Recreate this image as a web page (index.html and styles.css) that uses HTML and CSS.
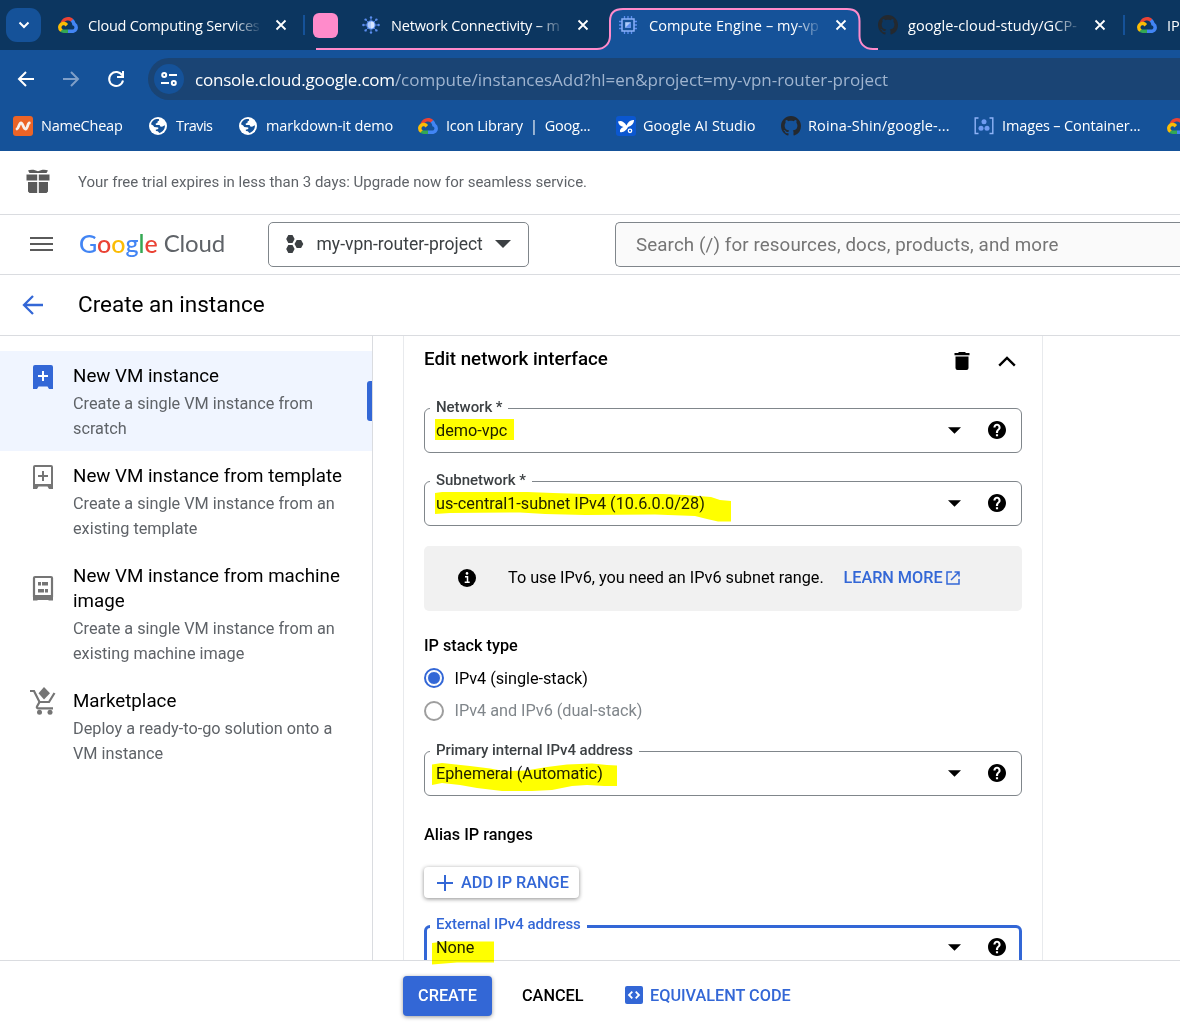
FILE: index.html
```html
<!DOCTYPE html>
<html lang="en">
<head>
<meta charset="utf-8">
<title>Compute Engine – my-vpn-router-project</title>
<link rel="stylesheet" href="styles.css">
</head>
<body>
<svg class="defs" aria-hidden="true">
  <symbol id="gcloud" viewBox="0 0 256 206">
    <path fill="#ea4335" d="M170.252 56.819l22.253-22.253 1.483-9.37C153.437-11.677 88.976-7.496 52.42 33.92 42.267 45.423 34.734 59.764 30.717 74.573l7.97-1.123 44.505-7.34 3.436-3.513c19.797-21.742 53.27-24.667 76.128-6.168z"/>
    <path fill="#4285f4" d="M224.205 73.918a100.249 100.249 0 0 0-30.217-48.722l-31.232 31.232a55.515 55.515 0 0 1 20.379 44.037v5.544c15.351 0 27.797 12.445 27.797 27.796 0 15.352-12.446 27.485-27.797 27.485h-55.671l-5.466 5.934v33.34l5.466 5.231h55.67c39.93.311 72.553-31.494 72.864-71.424a72.303 72.303 0 0 0-31.793-60.453"/>
    <path fill="#34a853" d="M71.87 205.796h55.593V161.29H71.87a27.275 27.275 0 0 1-11.4-2.498l-7.887 2.42-22.409 22.253-1.952 7.574a72.006 72.006 0 0 0 43.648 14.757"/>
    <path fill="#fbbc05" d="M71.87 61.425C31.94 61.664-.237 94.228.001 134.158a72.301 72.301 0 0 0 28.222 56.88l32.248-32.246c-13.99-6.322-20.208-22.786-13.887-36.776 6.32-13.99 22.786-20.208 36.775-13.888a27.796 27.796 0 0 1 13.887 13.888l32.248-32.248A72.224 72.224 0 0 0 71.87 61.425"/>
  </symbol>
  <symbol id="github" viewBox="0 0 16 16">
    <path fill="#24292f" d="M8 0C3.58 0 0 3.58 0 8c0 3.54 2.29 6.53 5.47 7.59.4.07.55-.17.55-.38 0-.19-.01-.82-.01-1.49-2.01.37-2.53-.49-2.69-.94-.09-.23-.48-.94-.82-1.13-.28-.15-.68-.52-.01-.53.63-.01 1.08.58 1.23.82.72 1.21 1.87.87 2.33.66.07-.52.28-.87.51-1.07-1.78-.2-3.64-.89-3.64-3.95 0-.87.31-1.59.82-2.15-.08-.2-.36-1.02.08-2.12 0 0 .67-.21 2.2.82.64-.18 1.32-.27 2-.27s1.36.09 2 .27c1.53-1.04 2.2-.82 2.2-.82.44 1.1.16 1.92.08 2.12.51.56.82 1.27.82 2.15 0 3.07-1.87 3.75-3.65 3.95.29.25.54.73.54 1.48 0 1.07-.01 1.93-.01 2.2 0 .21.15.46.55.38A8.01 8.01 0 0 0 16 8c0-4.42-3.58-8-8-8z"/>
  </symbol>
  <symbol id="globe" viewBox="0 0 18 18">
    <circle cx="9" cy="9" r="9" fill="#fff"/>
    <path fill="#155299" d="M2 7.2C2.6 4.500 4.800 2.500 7.500 2.050L9.800 2.100L10.200 3.400L8.600 4.600L8.400 5.900L6.700 6.600L6.900 7.900L10.600 8L11.300 9.600L13 9.800L15.900 8.200C16.200 11.700 13.900 14.900 10.400 15.900L8.800 14.200L7 14.100L6.700 12.800L9.300 12.100L9.200 10.600L5.200 9.900L4.200 8.400Z"/>
  </symbol>
  <symbol id="close" viewBox="0 0 12 12"><path d="M1.500 1.500l9 9M10.500 1.500l-9 9" stroke="#fff" stroke-width="1.800" fill="none"/></symbol>
  <symbol id="help" viewBox="2 2 20 20"><path d="M12 2C6.480 2 2 6.480 2 12s4.480 10 10 10 10-4.480 10-10S17.520 2 12 2zm1.200 17h-2.400v-2.400h2.400V19zm2-7.600l-.9.920C13.500 13.100 13.200 13.700 13.200 15.200h-2.400v-.6c0-1.100.3-2.100 1.100-2.800l1.200-1.300c.4-.3.6-.8.6-1.400 0-1-.8-1.700-1.700-1.700s-1.700.7-1.700 1.700H8c0-2.300 1.800-4.100 4-4.100s4 1.800 4 4.100c0 .9-.3 1.700-.8 2.300z"/></symbol>
  <symbol id="caret" viewBox="0 0 14 7"><path d="M0 0h14L7 7z"/></symbol>
</svg>

<div class="tabstrip">
  <svg class="tab-outline" width="1180" height="51" viewBox="0 0 1180 51">
    <path d="M597 51C605 48 610 43 610 36V21C610 13 615 9 623 9H847C855 9 859.500 13 859.500 21V36C859.500 43 864 48 872 51Z" fill="#155299"/>
    <path d="M316 49H597C605 49 610 43 610 36V21C610 13 615 9 623 9H847C855 9 859.500 13 859.500 21V36C859.500 43 864 49 873 49H878" fill="none" stroke="#ff8bcb" stroke-width="2"/>
  </svg>
  <div class="tab-search"><svg width="12" height="8" viewBox="0 0 12 8"><path d="M1.500 1.500L6 6l4.500-4.500" fill="none" stroke="#fff" stroke-width="2"/></svg></div>
  <div class="tab tab-first">
    <svg class="fav" width="20" height="16"><use href="#gcloud"/></svg>
    <span class="tab-title">Cloud Computing Services</span>
    <svg width="12" height="12"><use href="#close"/></svg>
  </div>
  <span class="tab-sep"></span>
  <span class="group-chip"></span>
  <div class="tab tab-second">
    <svg class="fav" width="18" height="18" viewBox="0 0 18 18"><g stroke="#5b8def" stroke-width=".8"><path d="M9 1v16M1 9h16M3.400 3.400l11.200 11.200M14.600 3.400L3.400 14.600"/></g><g fill="#5b8def"><circle cx="9" cy="1.400" r="1.200"/><circle cx="9" cy="16.600" r="1.200"/><circle cx="1.400" cy="9" r="1.200"/><circle cx="16.600" cy="9" r="1.200"/><circle cx="3.600" cy="3.600" r="1.200"/><circle cx="14.400" cy="3.600" r="1.200"/><circle cx="3.600" cy="14.400" r="1.200"/><circle cx="14.400" cy="14.400" r="1.200"/></g><circle cx="9" cy="9" r="4.600" fill="#5b8def"/><circle cx="9" cy="9" r="3.400" fill="#aecbfa"/><path d="M9 5.600a3.400 3.400 0 0 1 0 6.800z" fill="#d6e4ff"/></svg>
    <span class="tab-title">Network Connectivity – m</span>
    <svg width="12" height="12"><use href="#close"/></svg>
  </div>
  <div class="tab tab-third">
    <svg class="fav" width="18" height="18" viewBox="0 0 18 18"><path d="M5.500 0v18M9 0v18M12.500 0v18M0 5.500h18M0 9h18M0 12.500h18" stroke="#5b8def" stroke-width="1.300"/><rect x="3" y="3" width="12" height="12" fill="#155299" stroke="#8ab0f8" stroke-width="1.500"/><rect x="6.200" y="6.200" width="5.600" height="5.600" fill="#aecbfa"/><path d="M11.800 6.200v5.600H6.200z" fill="#5b8def"/></svg>
    <span class="tab-title">Compute Engine – my-vp</span>
    <svg width="12" height="12"><use href="#close"/></svg>
  </div>
  <div class="tab tab-fourth">
    <svg class="fav" width="20" height="20"><use href="#github"/></svg>
    <span class="tab-title">google-cloud-study/GCP-</span>
    <svg width="12" height="12"><use href="#close"/></svg>
  </div>
  <span class="tab-sep tab-sep-b"></span>
  <div class="tab tab-last">
    <svg class="fav" width="20" height="16"><use href="#gcloud"/></svg>
    <span class="tab-short">IP</span>
  </div>
</div>

<div class="toolbar">
  <div class="nav">
    <svg width="18" height="18" viewBox="0 0 18 18"><path d="M17 9H2M9 2L2 9l7 7" fill="none" stroke="#fff" stroke-width="2"/></svg>
    <svg width="18" height="18" viewBox="0 0 18 18"><path d="M1 9h15M9 2l7 7-7 7" fill="none" stroke="#7f9fc8" stroke-width="2"/></svg>
    <svg width="18" height="18" viewBox="0 0 18 18"><path d="M15.200 5.500A7 7 0 1 0 16 10.500" fill="none" stroke="#fff" stroke-width="2"/><path d="M16 1v6h-6" fill="none" stroke="#fff" stroke-width="2"/></svg>
  </div>
  <div class="omnibox">
    <span class="site-info"><svg width="16" height="14" viewBox="0 0 16 14"><g fill="none" stroke="#fff" stroke-width="2"><circle cx="3.200" cy="3" r="2"/><path d="M8 3h8M0 11h8"/><circle cx="12.800" cy="11" r="2"/></g></svg></span>
    <span class="url"><span class="host">console.cloud.google.com</span>/compute/instancesAdd?hl=en&amp;project=my-vpn-router-project</span>
  </div>
</div>

<div class="bookmarks">
  <div class="bm bm-tight"><svg width="20" height="20" viewBox="0 0 20 20"><rect width="20" height="20" rx="3" fill="#ec6426"/><path d="M4 13C5.500 13 6 7 8 7s2.500 6 4.500 6S14.800 7 16.300 7" fill="none" stroke="#f6f0ec" stroke-width="2.800" stroke-linecap="round"/></svg><span>NameCheap</span></div>
  <div class="bm bm-globe bm-tighter"><svg width="18" height="18"><use href="#globe"/></svg><span>Travis</span></div>
  <div class="bm bm-globe"><svg width="18" height="18"><use href="#globe"/></svg><span>markdown-it demo</span></div>
  <div class="bm bm-tight"><svg width="20" height="16"><use href="#gcloud"/></svg><span>Icon Library&nbsp; |&nbsp; Goog...</span></div>
  <div class="bm bm-loose"><svg width="20" height="20" viewBox="0 0 20 20"><rect width="20" height="20" rx="3" fill="#0b57d0"/><path d="M2 5.500C5 4 8 5.500 10.500 9.500C12 6 14.500 3.500 18 4C18 7.500 15.500 10 12 11C10.500 14 7.500 17 4 16C3.500 13.500 5 12 7.500 11C4.500 10.500 2.500 8.500 2 5.500Z" fill="#fff"/><circle cx="14" cy="14.800" r="1.700" fill="none" stroke="#fff" stroke-width="1.300"/></svg><span>Google AI Studio</span></div>
  <div class="bm bm-looser"><svg width="20" height="20"><use href="#github"/></svg><span>Roina-Shin/google-...</span></div>
  <div class="bm"><svg width="20" height="18" viewBox="0 0 20 18"><path d="M4.500 1H1.200v4.500M1.200 12v4.500h3.300M15.500 1h3.300v4.500M18.800 12v4.500h-3.300M1.200 5v8M18.800 5v8" fill="none" stroke="#8fb3f7" stroke-width="1.400"/><g fill="#6f9bf2"><circle cx="10" cy="4.800" r="2.500"/><circle cx="7" cy="11.200" r="2.500"/><circle cx="13" cy="11.200" r="2.500"/></g></svg><span>Images – Container...</span></div>
  <div class="bm"><svg width="20" height="16"><use href="#gcloud"/></svg></div>
</div>

<div class="trial">
  <svg width="24" height="24" viewBox="0 0 24 24" fill="#5a5a5a"><path d="M2 1.500C4.500.200 9 .400 12 2.300C15 .400 19.500.200 22 1.500L20.500 4H3.500Z"/><path d="M.5 5.500h10.700v6H.5zM12.800 5.500h10.700v6H12.800zM2 13h9.200v11H3.500L2 22.500zM12.800 13H22v9.500L20.500 24h-7.700z"/></svg>
  <span class="trial-text">Your free trial expires in less than 3 days: Upgrade now for seamless service.</span>
</div>

<div class="header">
  <svg class="menu" width="23" height="16" viewBox="0 0 23 16"><path d="M0 2h23M0 8h23M0 14h23" stroke="#5a5a5a" stroke-width="2"/></svg>
  <div class="logo"><span class="google"><span class="g-b">G</span><span class="g-r">o</span><span class="g-y">o</span><span class="g-b">g</span><span class="g-g">l</span><span class="g-r">e</span></span><span class="cloud">Cloud</span></div>
  <div class="project">
    <svg width="18" height="18" viewBox="0 0 18 18" fill="#3c4043"><path d="M2.300 0h4.200l2.100 4-2.100 4H2.300L.2 4zM10.700 5h4.400l2.200 4-2.200 4h-4.400L8.500 9zM2.300 10h4.200l2.100 4-2.100 4H2.300L.2 14z"/></svg>
    <span class="project-name">my-vpn-router-project</span>
    <svg width="16" height="8" fill="#3c4043"><use href="#caret"/></svg>
  </div>
  <div class="search">Search (/) for resources, docs, products, and more</div>
</div>

<div class="titlebar">
  <svg width="22" height="20" viewBox="0 0 22 20"><path d="M21 10H2M11 1L2 10l9 9" fill="none" stroke="#3367d6" stroke-width="2.300"/></svg>
  <h1>Create an instance</h1>
</div>

<div class="main">
  <nav class="side">
    <div class="item item-active">
      <svg class="item-icon" width="26" height="26" viewBox="0 0 26 26"><path d="M5 1h16a2 2 0 0 1 2 2v22h-4l-1.500-2.500h-9L7 25H3V3a2 2 0 0 1 2-2z" fill="#3367d6"/><path d="M13 7v10M8 12h10" stroke="#fff" stroke-width="2"/></svg>
      <div class="item-text"><div class="item-title">New VM instance</div><div class="item-desc">Create a single VM instance from<br>scratch</div></div>
    </div>
    <div class="item">
      <svg class="item-icon" width="26" height="26" viewBox="0 0 26 26"><path d="M5 2h16a1 1 0 0 1 1 1v18H4V3a1 1 0 0 1 1-1z" fill="none" stroke="#757575" stroke-width="2"/><path d="M3 20h20v5h-4l-1.500-2.500h-9L7 25H3z" fill="#757575"/><path d="M13 7v10M8 12h10" stroke="#757575" stroke-width="2"/></svg>
      <div class="item-text"><div class="item-title">New VM instance from template</div><div class="item-desc">Create a single VM instance from an<br>existing template</div></div>
    </div>
    <div class="item">
      <svg class="item-icon" width="26" height="26" viewBox="0 0 26 26"><path d="M5 2h16a1 1 0 0 1 1 1v18H4V3a1 1 0 0 1 1-1z" fill="none" stroke="#757575" stroke-width="2.200"/><path d="M3 21h20v4.500h-4L18 25H8l-1 .5H3z" fill="#757575"/><path d="M8 7h3v3.500H8zM12 7h6v3.500h-6zM8 14h6v3.500H8zM15 14h3v3.500h-3z" fill="#757575"/></svg>
      <div class="item-text"><div class="item-title">New VM instance from machine<br>image</div><div class="item-desc">Create a single VM instance from an<br>existing machine image</div></div>
    </div>
    <div class="item">
      <svg class="item-icon" width="26" height="28" viewBox="0 0 26 28"><path d="M0 4h4l5.500 11h9.500L24.500 6" fill="none" stroke="#757575" stroke-width="2.200"/><path d="M9.500 15L7 19.500c-.5 1 0 1.800 1 1.800h15" fill="none" stroke="#757575" stroke-width="2.200"/><path d="M14 0l6 6.300-6 6.300L8.500 6.300z" fill="#757575"/><circle cx="9.500" cy="25.300" r="2.500" fill="#757575"/><circle cx="20" cy="25.300" r="2.500" fill="#757575"/></svg>
      <div class="item-text"><div class="item-title">Marketplace</div><div class="item-desc">Deploy a ready-to-go solution onto a<br>VM instance</div></div>
    </div>
  </nav>

  <section class="content">
    <div class="card">
      <div class="card-head">
        <h2>Edit network interface</h2>
        <svg width="16" height="18" viewBox="0 0 16 18"><path d="M5 0h6l1 1h3.500v2.200H.5V1H4zM1.500 4.500h13V16a2 2 0 0 1-2 2h-9a2 2 0 0 1-2-2z"/></svg>
        <svg width="18" height="11" viewBox="0 0 18 11"><path d="M1.200 9.700L9 2l7.800 7.700" fill="none" stroke="#000" stroke-width="2.400"/></svg>
      </div>

      <div class="field">
        <span class="label">Network *</span>
        <span class="value">demo-vpc</span>
        <svg class="caret" width="13" height="7"><use href="#caret"/></svg>
        <svg class="help" width="18" height="18"><use href="#help"/></svg>
        <svg class="marker" width="80" height="22" viewBox="0 0 80 22"><path d="M0 0h79v21H0z"/></svg>
      </div>

      <div class="field field-sub">
        <span class="label">Subnetwork *</span>
        <span class="value">us-central1-subnet IPv4 (10.6.0.0/28)</span>
        <svg class="caret" width="13" height="7"><use href="#caret"/></svg>
        <svg class="help" width="18" height="18"><use href="#help"/></svg>
        <svg class="marker" width="298" height="32" viewBox="0 0 298 32"><path d="M0 2L7 1H93L118 2L150 3H228L250 4L276 6L285 9L296 10V30.500H283L272 28L260 25L220 23.500L150 24L110 23L85 21.500L15 22L0 23Z"/></svg>
      </div>

      <div class="info">
        <svg width="18" height="18" viewBox="0 0 18 18"><circle cx="9" cy="9" r="9"/><path d="M7 7.800h2.500V13M6.700 13.300h5" stroke="#fff" stroke-width="1.500" fill="none"/><circle cx="9" cy="4.400" r="1.300" fill="#fff"/></svg>
        <span class="info-text">To use IPv6, you need an IPv6 subnet range.</span>
        <a class="learn"><span>LEARN MORE</span><svg width="14" height="14" viewBox="0 0 14 14"><path d="M6 1H1v12h12V8M8.500 1H13v4.500M13 1L5 9" fill="none" stroke="#3367d6" stroke-width="1.500"/></svg></a>
      </div>

      <h3>IP stack type</h3>
      <div class="radio"><span class="dot dot-on"></span><span>IPv4 (single-stack)</span></div>
      <div class="radio radio-off"><span class="dot"></span><span>IPv4 and IPv6 (dual-stack)</span></div>

      <div class="field field-primary">
        <span class="label">Primary internal IPv4 address</span>
        <span class="value">Ephemeral (Automatic)</span>
        <svg class="caret" width="13" height="7"><use href="#caret"/></svg>
        <svg class="help" width="18" height="18"><use href="#help"/></svg>
        <svg class="marker" width="186" height="30" viewBox="0 0 186 30"><path d="M0 1.500L10 0L38 3L58 5.500L72 8L94 7.500L115 4L135 1.500L160 .5L175 2L185 2.500V23H172L155 22L140 23L120 27L100 28H70L45 25L28 22L10 20L0 22Z"/></svg>
      </div>

      <h3 class="alias">Alias IP ranges</h3>
      <button class="add"><svg width="16" height="16" viewBox="0 0 16 16"><path d="M8 0v16M0 8h16" stroke="#3367d6" stroke-width="2"/></svg><span>ADD IP RANGE</span></button>

      <div class="field field-focus">
        <span class="label">External IPv4 address</span>
        <span class="value">None</span>
        <svg class="caret" width="13" height="7"><use href="#caret"/></svg>
        <svg class="help" width="18" height="18"><use href="#help"/></svg>
      </div>
    </div>
  </section>
</div>

<div class="footer">
  <svg class="marker" width="63" height="24" viewBox="0 0 63 24"><path d="M0 2L12 .5H62V21.500H25L0 23.500Z"/></svg>
  <button class="create">CREATE</button>
  <button class="plain">CANCEL</button>
  <button class="code"><svg width="18" height="18" viewBox="0 0 18 18"><rect width="18" height="18" rx="2" fill="#3367d6"/><path d="M7.300 5.700L4 9l3.300 3.300M10.700 5.700L14 9l-3.300 3.300" fill="none" stroke="#fff" stroke-width="1.800"/></svg><span>EQUIVALENT CODE</span></button>
</div>
</body>
</html>
```
FILE: styles.css
```css
* { box-sizing: border-box; }
body {
  margin: 0;
  width: 1180px;
  height: 1024px;
  overflow: hidden;
  display: flex;
  flex-direction: column;
  background: #fff;
  color: #000;
  font-family: Roboto, sans-serif;
}
svg { display: block; flex: none; }
.defs { position: absolute; width: 0; height: 0; }
h1, h2, h3 { margin: 0; }
button { border: 0; padding: 0; font: inherit; color: inherit; }

/* browser tab strip */
.tabstrip {
  position: relative;
  flex: none;
  display: flex;
  align-items: center;
  height: 50px;
  padding-left: 6px;
  background: #0c3660;
  overflow: hidden;
  font: 14.500px/20px "Open Sans", "Noto Sans", sans-serif;
  color: #fff;
}
.tab-outline { position: absolute; left: 0; top: 0; }
.tab-search {
  flex: none;
  display: flex;
  align-items: center;
  justify-content: center;
  width: 35px;
  height: 34px;
  border-radius: 11px;
  background: #155299;
}
.tab { position: relative; flex: none; display: flex; align-items: center; width: 229px; }
.tab-first { margin-left: 17px; letter-spacing: -.2px; }
.tab-second { margin-left: 24px; letter-spacing: -.16px; }
.tab-third { margin-left: 28px; letter-spacing: .1px; }
.tab-fourth { margin-left: 30px; letter-spacing: .09px; }
.tab-last { margin-left: 12px; gap: 10px; }
.tab-title {
  flex: none;
  width: 172px;
  margin: 0 15px 0 10px;
  padding-top: 2px;
  overflow: hidden;
  white-space: pre;
  -webkit-mask-image: linear-gradient(90deg, #000 145px, transparent 174px);
  mask-image: linear-gradient(90deg, #000 145px, transparent 174px);
}
.tab-short { padding-top: 2px; }
.tab-second .tab-title { margin: 0 14px 0 11px; }
.tab-third .tab-title { margin: 0 14px 0 12px; }
.tab-fourth .tab-title { margin-right: 14px; }
.tab-sep { flex: none; width: 2px; height: 20px; margin-left: 16px; background: #155299; }
.group-chip { flex: none; width: 25px; height: 25px; margin-left: 8px; border-radius: 6px; background: #ff8bcb; }

/* address bar */
.toolbar { flex: none; display: flex; align-items: center; height: 58px; background: #155299; }
.nav { display: flex; gap: 27px; padding-left: 17px; width: 148px; }
.omnibox {
  flex: 1;
  display: flex;
  align-items: center;
  gap: 11px;
  height: 42px;
  padding-left: 6px;
  border-radius: 21px 0 0 21px;
  background: #1a4474;
}
.site-info { display: flex; align-items: center; justify-content: center; width: 30px; height: 30px; border-radius: 50%; background: #155299; }
.url { padding-top: 1px; font: 17px/24px "Open Sans", "Noto Sans", sans-serif; letter-spacing: -.02px; color: #9fb4cf; white-space: nowrap; }
.host { letter-spacing: -.2px; color: #fff; }

.bookmarks {
  flex: none;
  display: grid;
  grid-template-columns: 135px 90px 180px 198px 165px 193px 193px 40px;
  align-items: center;
  height: 43px;
  padding: 0 0 7px 13px;
  background: #155299;
  color: #fff;
  font: 14.500px/20px "Open Sans", "Noto Sans", sans-serif;
}
.bm { display: flex; align-items: center; gap: 8px; white-space: nowrap; letter-spacing: -.13px; }
.bm-globe { padding-left: 1px; gap: 9px; }
.bm-tight { letter-spacing: -.23px; }
.bm-tighter { letter-spacing: -.55px; }
.bm-loose { gap: 7px; letter-spacing: .05px; }
.bm-looser { gap: 7px; letter-spacing: .14px; }

/* console header */
.trial {
  flex: none;
  display: flex;
  align-items: center;
  gap: 28px;
  height: 64px;
  padding: 0 0 3px 26px;
  border-bottom: 1px solid #dadce0;
  font-size: 15px;
  color: #5f6368;
}
.trial-text { padding-top: 1px; }
.header { flex: none; display: flex; align-items: center; height: 60px; padding-left: 30px; border-bottom: 1px solid #dadce0; }
.menu { margin-bottom: 1px; }
.logo { display: flex; gap: 6px; width: 188px; padding-left: 26px; margin: 0 27px 4px 0; font: 25px/30px Lato, sans-serif; color: #5f6368; }
.google { font-weight: 500; }
.cloud { font-size: 24px; letter-spacing: -.2px; }
.g-b { color: #4285f4; }
.g-r { color: #ea4335; }
.g-y { color: #fbbc05; }
.g-g { color: #34a853; }
.project {
  display: flex;
  align-items: center;
  width: 261px;
  height: 45px;
  padding: 0 0 2px 17px;
  border: 1px solid #80868b;
  border-radius: 5px;
  color: #3c4043;
  font-size: 17.500px;
}
.project-name { width: 167px; margin: 0 11.500px 0 12.500px; white-space: nowrap; }
.search {
  flex: 1;
  display: flex;
  align-items: center;
  height: 45px;
  margin-left: 86px;
  padding-left: 20px;
  border: 1px solid #80868b;
  border-right: 0;
  border-radius: 5px 0 0 5px;
  background: #fafafa;
  color: #757575;
  font-size: 18.750px;
  letter-spacing: .11px;
  white-space: nowrap;
}
.titlebar { flex: none; display: flex; align-items: center; gap: 34px; height: 61px; padding: 0 0 1px 22px; border-bottom: 1px solid #dadce0; }
h1 { padding-bottom: 2px; font-size: 22.500px; font-weight: 400; }

/* body */
.main { flex: none; display: flex; height: 624px; overflow: hidden; }
.side { flex: none; width: 373px; padding-top: 15px; border-right: 1px solid #dadce0; }
.item { position: relative; display: flex; gap: 17px; padding: 13px 0 10px 30px; }
.item-active { background: #f0f5ff; }
.item-active::after {
  content: "";
  position: absolute;
  right: 0;
  top: 30px;
  width: 5px;
  height: 40px;
  border-radius: 3px 0 0 3px;
  background: #3367d6;
}
.item:nth-child(3) .item-icon { margin-top: 11px; }
.item:nth-child(4) .item-icon { margin-top: -2px; }
.item-title { font-size: 18.750px; line-height: 25px; }
.item-desc { margin-top: 2px; font-size: 16.250px; line-height: 25px; color: #5f6368; white-space: nowrap; }

.content { padding-left: 30px; }
.card { width: 640px; height: 700px; padding: 0 20px; border: solid #e8eaed; border-width: 0 1px; }
.card-head { display: flex; align-items: center; height: 52px; padding: 0 6px 2px 0; margin-bottom: 20px; }
h2 { flex: 1; padding-bottom: 4px; font-size: 18.750px; font-weight: 500; }
.card-head svg:last-child { margin: 1px 0 0 28px; }
.field {
  position: relative;
  display: flex;
  align-items: center;
  height: 45px;
  padding: 0 15px 0 11px;
  border: 1px solid #80868b;
  border-radius: 6px;
  font-size: 16.250px;
}
.field-sub { margin-top: 28px; }
.field-primary { margin-top: 30px; }
.label {
  position: absolute;
  left: 5px;
  top: -12px;
  padding: 0 6px;
  background: #fff;
  font-size: 15px;
  font-weight: 500;
  line-height: 20px;
  letter-spacing: -.04px;
  color: #3c4043;
  white-space: nowrap;
}
.value { flex: 1; color: #202124; }
.caret { margin-right: 27px; }
.help { margin-bottom: 1px; }
.marker { position: absolute; z-index: 2; fill: #ff0; mix-blend-mode: multiply; }
.field .marker { left: 10px; top: 10px; }
.field-sub .marker { top: 9px; }
.field-primary .marker { left: 7px; top: 11px; }
.info { display: flex; align-items: center; height: 65px; margin-top: 20px; padding: 0 0 2px 34px; border-radius: 5px; background: #f1f1f1; font-size: 16.250px; }
.info-text { width: 335.500px; margin-left: 32px; letter-spacing: -.02px; }
.learn { display: flex; align-items: center; gap: 3px; color: #3367d6; font-weight: 500; letter-spacing: -.03px; }
h3 { margin-top: 24px; font-size: 16.250px; line-height: 22px; font-weight: 500; }
.radio { display: flex; align-items: center; gap: 10.500px; height: 20px; margin-top: 12px; font-size: 16.250px; letter-spacing: -.03px; }
h3 + .radio { margin-top: 11px; }
.radio-off { margin-top: 13px; color: #80868b; }
.radio-off span:last-child { padding-bottom: 2px; }
.dot { display: flex; align-items: center; justify-content: center; width: 20px; height: 20px; border: 2px solid #9e9e9e; border-radius: 50%; }
.dot-on { border-color: #3367d6; }
.dot-on::after { content: ""; width: 12px; height: 12px; flex: none; border-radius: 50%; background: #3367d6; border: 1px solid #fff; }
.alias { margin-top: 28px; }
.add {
  display: flex;
  align-items: center;
  gap: 8px;
  width: 155px;
  height: 31px;
  margin-top: 21px;
  padding-left: 13px;
  border-radius: 4px;
  background: #fff;
  box-shadow: 0 1px 4px rgba(0, 0, 0, .45);
  color: #3367d6;
  font-size: 16.250px;
  font-weight: 500;
  white-space: nowrap;
}
.field-focus { margin-top: 27px; border: 3px solid #3367d6; padding: 0 13px 0 9px; }
.field-focus .label { left: 3px; top: -14px; color: #3367d6; }

/* action bar */
.footer { position: relative; flex: 1; display: flex; align-items: flex-start; padding: 15px 0 0 403px; border-top: 1px solid #dadce0; font-size: 16.250px; font-weight: 500; }
.footer .marker { left: 432px; top: -20px; }
.footer button { height: 40px; padding-bottom: 2px; background: none; white-space: nowrap; }
.footer .create { width: 89px; border-radius: 4px; background: #3367d6; color: #fff; box-shadow: 0 1px 4px rgba(0, 0, 0, .4); }
.footer .plain { width: 61px; margin-left: 30px; }
.footer .code { display: flex; align-items: center; gap: 7px; margin-left: 42px; color: #3367d6; }
```
